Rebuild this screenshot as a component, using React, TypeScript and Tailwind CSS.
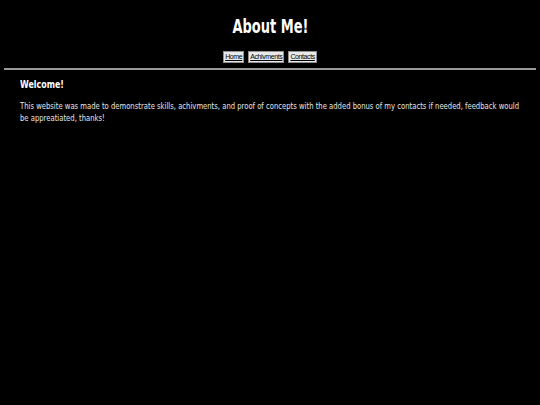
import React from 'react';

const links = ['Home', 'Achivments', 'Contacts'];

const App = () => {
  return (
    <div className="min-h-[405px] overflow-hidden bg-black text-white" style={{ fontFamily: '"DejaVu Sans", sans-serif' }}>
      {/* Header */}
      <div className="pt-[14px] text-center">
        <h1 className="text-[20px] font-bold leading-[24px]">
          <span className="inline-block scale-x-[0.65]">About Me!</span>
        </h1>
        <div className="mt-[13px] flex justify-center gap-[4px]">
          {links.map((l) => (
            <button
              key={l}
              className="h-[12px] px-[1px] bg-[#e9e9e9] border border-[#8f8f8f] text-black text-[7px] leading-[10px] tracking-[-0.4px] underline font-['Liberation_Sans',sans-serif]"
            >
              {l}
            </button>
          ))}
        </div>
      </div>
      <hr className="mx-[4px] mt-[5px] border-t-[2px] border-[#9a9a9a]" />

      {/* Main */}
      <div className="px-[20px] pt-[8px]">
        <h2 className="text-[11px] font-bold leading-[14px]">
          <span className="inline-block origin-left scale-x-[0.72]">Welcome!</span>
        </h2>
        <p className="mt-[8px] w-[664px] origin-left scale-x-[0.76] text-[9px] leading-[12px] text-[#e6e6e6]">
          This website was made to demonstrate skills, achivments, and proof of concepts with the added bonus of my contacts if needed, feedback would be appreatiated, thanks!
        </p>
      </div>
    </div>
  );
};

export default App;
